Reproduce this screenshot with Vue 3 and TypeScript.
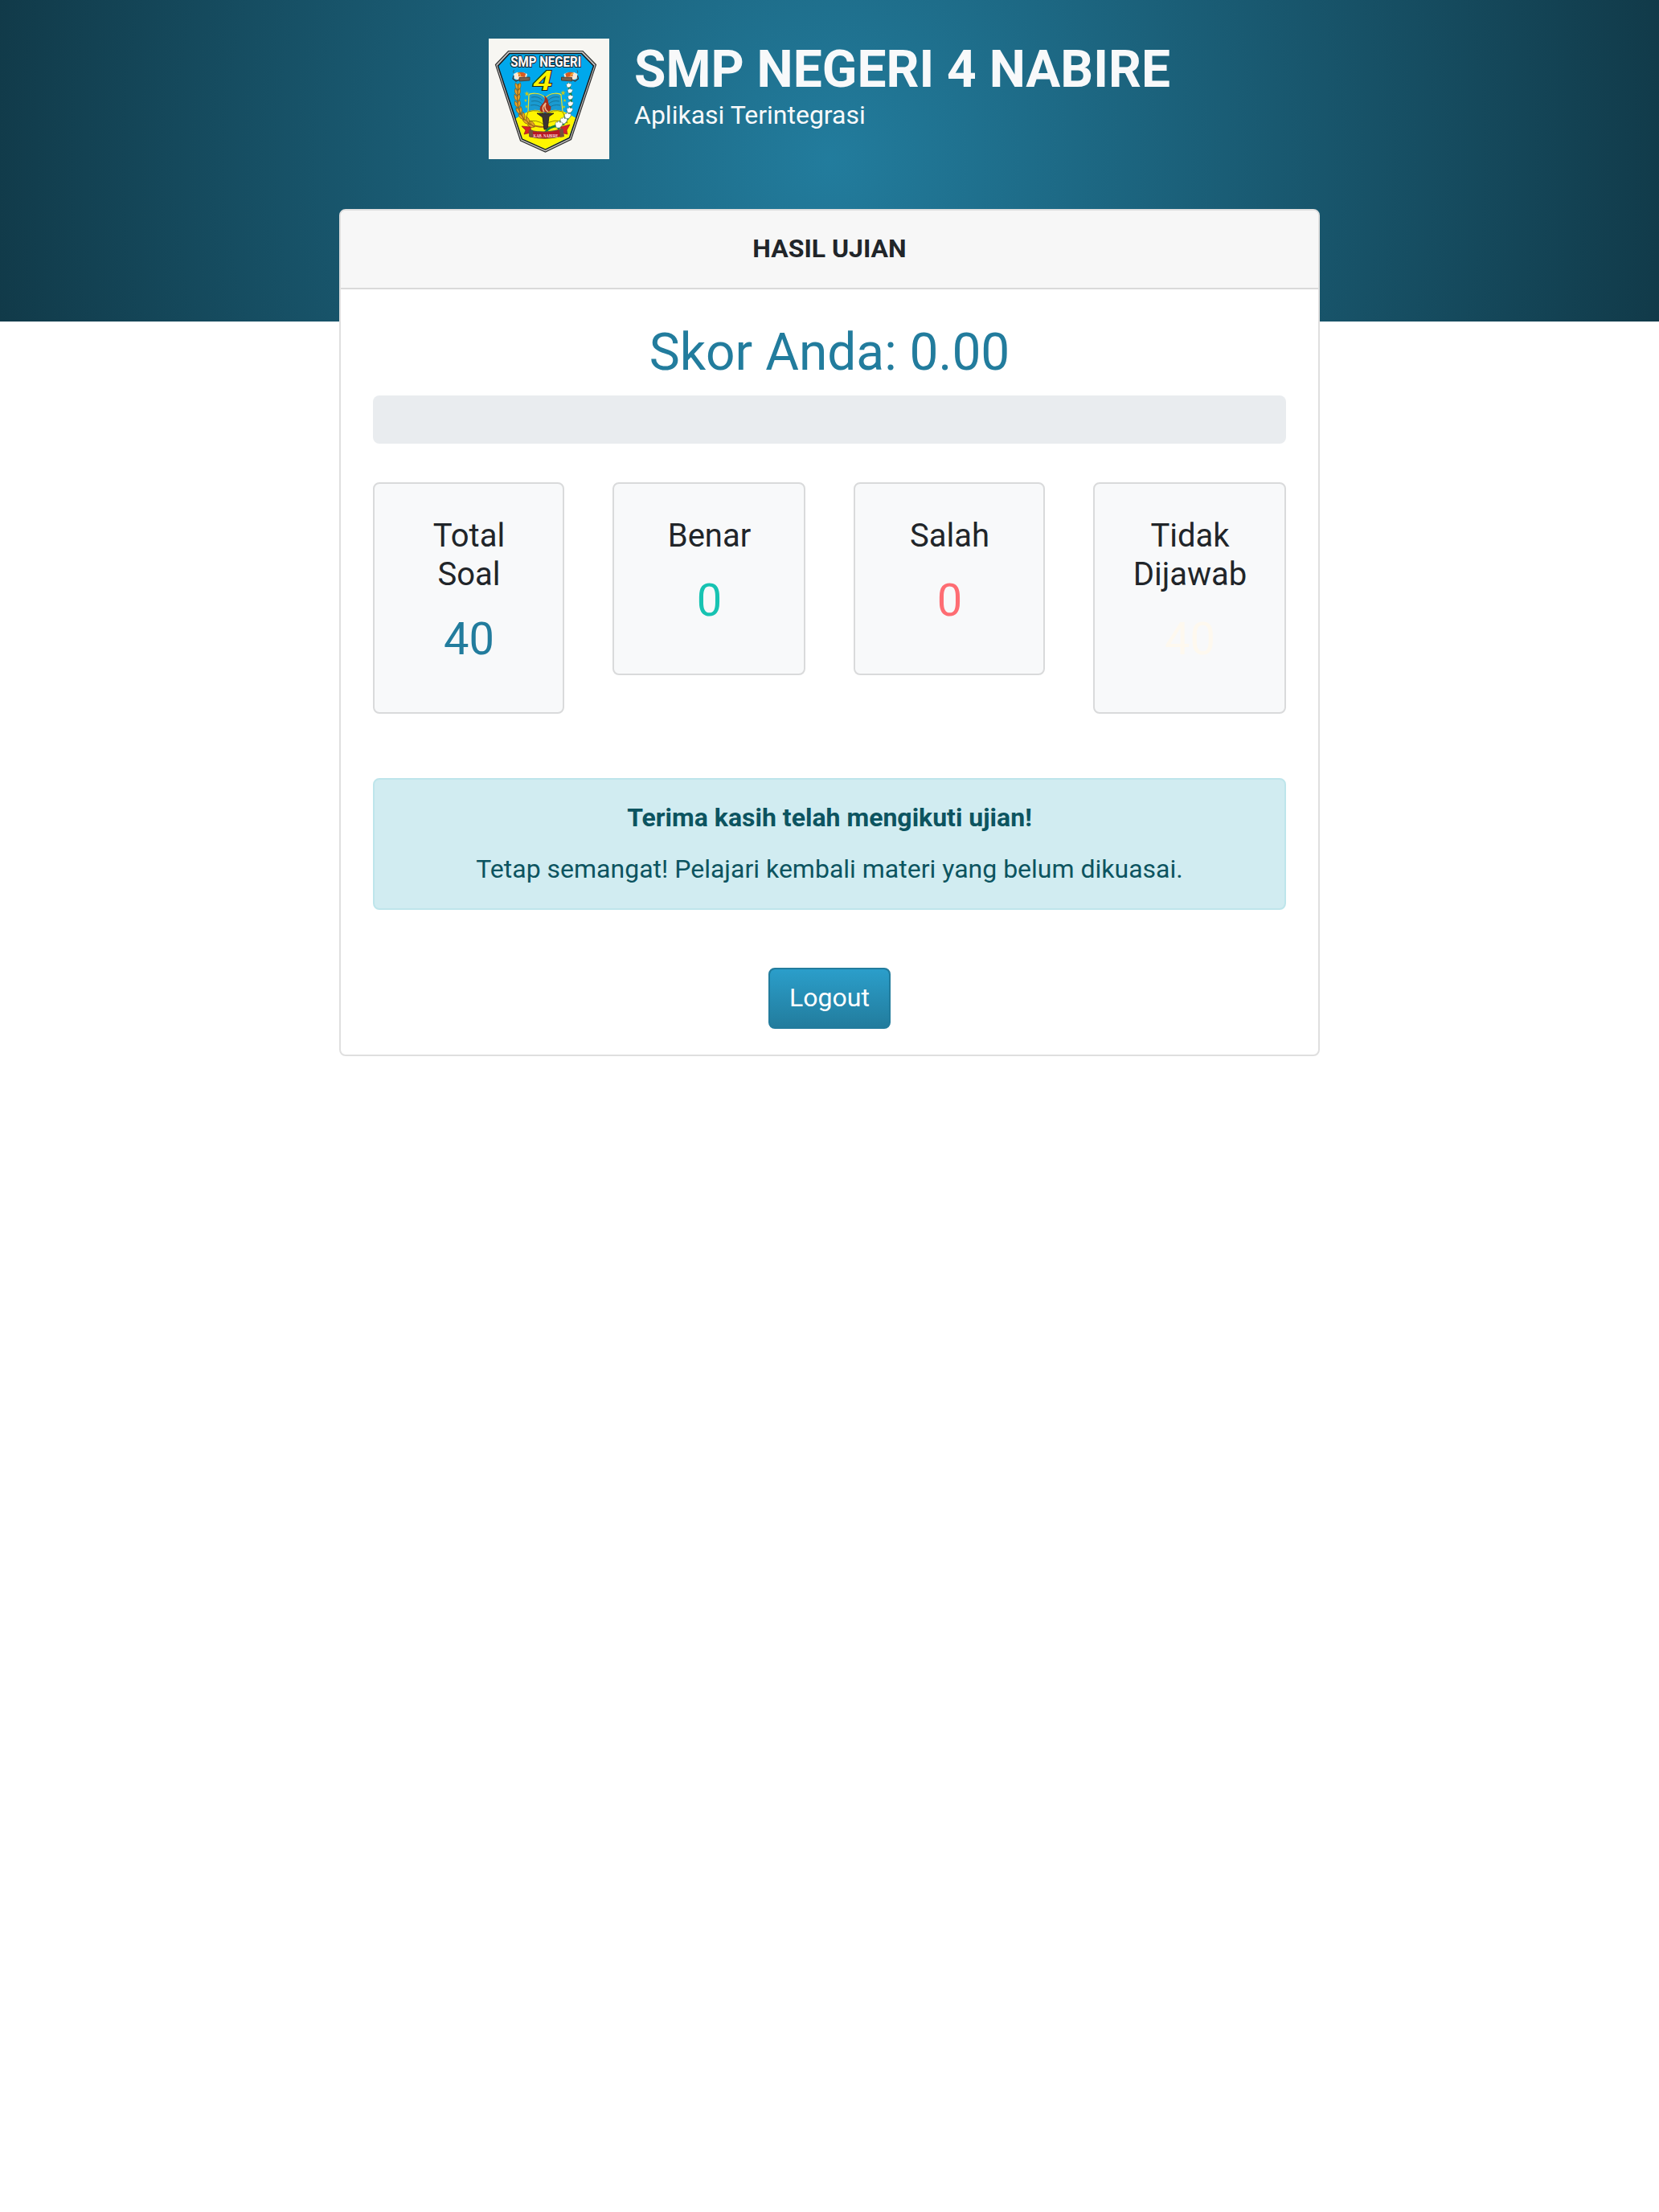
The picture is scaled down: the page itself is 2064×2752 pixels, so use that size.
<script setup lang="ts">
interface Stat { label: string; value: number; tone: string }
const stats: Stat[] = [
  { label: 'Total Soal', value: 40, tone: 'primary' },
  { label: 'Benar', value: 0, tone: 'success' },
  { label: 'Salah', value: 0, tone: 'danger' },
  { label: 'Tidak Dijawab', value: 40, tone: 'warning' },
]

// Emblem details: [x, y, rotation] for grains, [x, y, scale] for stars and cotton buds
const grains = [[36.5, 59, -2], [36, 66, -2], [35.5, 73, -4], [36, 81, -8], [38, 89, -16], [41.5, 96, -26], [47, 102, -38], [53, 107, -55]]
const stars = [[47.5, 68.5, 3.3], [46, 77, 2.2], [47, 84.5, 2.2], [92.5, 67.5, 3.3], [94.5, 77, 2.2], [93.5, 85, 2.2]]
const buds = [[99.5, 58, 0.9], [101, 65, 0.9], [101.5, 73, 0.95], [101.5, 81, 1], [100.5, 89, 1.1], [98, 96, 1.2], [93, 102, 1.3], [87, 107, 1.35]]
</script>

<template>
  <div class="page">
    <header class="banner">
      <div class="brand">
        <svg class="logo" viewBox="0 0 150 150">
          <rect width="150" height="150" fill="#f7f6f2" />
          <path d="M24.5 15.5 L117 15.5 L133.5 32.5 L102.5 125.5 L70.5 141 L39.5 127 L8.5 32.5 Z" fill="#c4c4c4" stroke="#303030" stroke-width="1.2" />
          <path d="M26 18.5 L115.5 18.5 L130.5 34 L100.5 123.5 L70.5 138 L41.5 125 L11.5 34 Z" fill="#00a8ec" stroke="#1b1b1b" stroke-width="1.5" />
          <path d="M33.8 99.5 Q69 74 108 98.500 L99.8 122.8 L70.5 137.2 L42.2 124.4 Z" fill="#fff500" />
          <text x="71.2" y="35.3" text-anchor="middle" textLength="88" lengthAdjust="spacingAndGlyphs" class="arch">SMP NEGERI</text>
          <text x="67.3" y="64" text-anchor="middle" textLength="24" lengthAdjust="spacingAndGlyphs" class="four">4</text>
          <g v-for="side in [0, 1]" :key="side" :transform="side ? 'translate(141.5 0) scale(-1 1)' : undefined">
            <path d="M31 44l4-2 8 0 5 2-1 5-8 3-7-2z" fill="#f5e9d8" />
            <path d="M31 43q-1-4 1-4M36 43q5-2 10 1" stroke="#3f4950" stroke-width=".7" fill="none" />
            <path d="M37 42q6-1 9 2l-1 4-8-1z" fill="#d85b20" />
            <path d="M36 43q4 1 3 4" stroke="#f0ad35" stroke-width="1.8" fill="none" />
            <path d="M31 46l-1 4 4 3 4-2" fill="none" stroke="#4a2d21" stroke-width="1.1" />
            <path d="M38 48.5l13-.5v4l-13 1z" fill="#75604c" stroke="#44342a" stroke-width=".8" />
          </g>
          <path d="M70.5 74C64 66 52 68 50 70L49 91C57 88 66 89 70.5 95C75 89 84 88 92 91L90 70C88 68 77 66 70.5 74Z" fill="#1a9bd2" stroke="#ece526" stroke-width="1.2" />
          <path d="M53 73q9-2 14 4M53 78q9-2 14 4M52 83q9-2 15 4M88 73q-9-2-14 4M88 78q-9-2-14 4M89 83q-9-2-15 4" fill="none" stroke="#176a88" stroke-width=".8" />
          <path d="M49 91Q62 87 70.5 95Q79 87 92 91L98 105Q80 98 70 108Q60 99 45 104Z" fill="#fff500" stroke="#877e08" stroke-width=".9" />
          <path v-for="(s, i) in stars" :key="'star' + i" :transform="`translate(${s[0]} ${s[1]}) scale(${s[2]})`" d="M0-1L.25-.3 1-.3.4.15.6.9 0 .45-.6.9-.4.15-1-.3-.25-.3Z" fill="#c7c51f" />
          <path d="M37 56C34 80 37 94 47 104Q57 111 76 110" fill="none" stroke="#a86b18" stroke-width="1.8" />
          <g v-for="(g, i) in grains" :key="'grain' + i" :transform="`translate(${g[0]} ${g[1]}) rotate(${g[2]})`">
            <path d="M0 5Q-5 2-3-4Q1-1 0 5ZM0 5Q5 2 3-4Q-1-1 0 5Z" fill="#e5a42a" stroke="#8b5917" stroke-width=".7" />
          </g>
          <path d="M60 93L81 93L75 97L73 113L69 113L67 98Z" fill="#3b3435" stroke="#191919" stroke-width=".8" />
          <path d="M65 91C60 82 73 82 69 71C77 76 72 82 77 84Q79 89 73 92Z" fill="#a62d18" />
          <path d="M69 91Q65 86 71 80Q68 88 74 91" stroke="#efb98b" stroke-width="1.5" fill="none" />
          <path d="M99 55C105 75 104 94 90 105M88 109Q76 108 70 117" fill="none" stroke="#11803f" stroke-width="2.6" />
          <g v-for="(b, i) in buds" :key="'bud' + i" :transform="`translate(${b[0]} ${b[1]}) scale(${b[2]})`">
            <path d="M-4 0l4 5 4-5z" fill="#127c40" />
            <path d="M-3 0q0-3 2-2q1-3 2 0q4-1 2 3l-2 2-3 0z" fill="#fff" stroke="#687a78" stroke-width=".5" />
          </g>
          <path d="M41 109l11 1 1 7-9 2 2-5zM101 107l-11 3-1 7 9 2-1-5z" fill="#d82028" stroke="#921b20" stroke-width=".7" />
          <path d="M50 114Q71 119 92 112L93 121Q71 127 51 122Z" fill="#b91825" stroke="#77503a" />
          <path d="M51 113l4 1v9l-5-1zM88 113l4-1 2 10-5 1z" fill="#75513d" />
          <text x="71" y="122.5" text-anchor="middle" textLength="31" lengthAdjust="spacingAndGlyphs" class="ribbon">KAB. NABIRE</text>
        </svg>
        <div class="names">
          <h1>SMP NEGERI 4 NABIRE</h1>
          <p>Aplikasi Terintegrasi</p>
        </div>
      </div>
    </header>

    <main class="card">
      <div class="card-header">HASIL UJIAN</div>
      <div class="card-body">
        <h2>Skor Anda: 0.00</h2>
        <div class="progress"></div>
        <div class="stats">
          <section v-for="s in stats" :key="s.label" class="stat">
            <h5>{{ s.label }}</h5>
            <p :class="s.tone">{{ s.value }}</p>
          </section>
        </div>
        <div class="alert">
          <strong>Terima kasih telah mengikuti ujian!</strong>
          <p>Tetap semangat! Pelajari kembali materi yang belum dikuasai.</p>
        </div>
        <button type="button">Logout</button>
      </div>
    </main>
  </div>
</template>

<style>
body { background: #fff; }
</style>

<style scoped>
* { box-sizing: border-box; }
h1, h2, h5, p { margin: 0; font-weight: 400; }
.page { min-height: 2752px; font: 32px/48px Roboto, sans-serif; color: #212529; background: #fff; }
.banner { height: 400px; padding-top: 48px; background: radial-gradient(circle, #227c9d, #113a49); }
.brand { display: flex; width: 848px; margin: 0 auto; gap: 31px; }
.logo { display: block; width: 150px; height: 150px; flex: none; }
.names { color: #f8f9fa; white-space: nowrap; }
.names h1 { padding-top: 1px; font-size: 64px; line-height: 76px; font-weight: 700; }
.names p { line-height: 36px; }
.arch { font: 700 18px Roboto, sans-serif; fill: #fff; stroke: #202024; stroke-width: 2.2px; paint-order: stroke; }
.four { font: italic 500 34px Roboto, sans-serif; fill: #fff200; stroke: #25251b; stroke-width: 2px; paint-order: stroke; }
.ribbon { font: 700 6.5px "Liberation Serif", serif; fill: #f6dede; }
.card { width: 1220px; height: 1054px; margin: -140px auto 0; border: 2px solid #dfdfdf; border-radius: 8px; background: #fff; position: relative; overflow: hidden; text-align: center; }
.card-header { height: 98px; padding: 23px 40px; background: #f7f7f7; border-bottom: 2px solid #d9d9d9; font-weight: 700; }
.card-body { padding: 40px; }
h2 { padding-top: 1px; font-size: 64px; line-height: 76px; color: #227c9d; }
.progress { height: 60px; margin: 15px 0 48px; border-radius: 8px; background: #e9ecef; }
.stats { display: grid; grid-template-columns: 238px 240px 238px 240px; gap: 60px; align-items: start; }
.stat { padding: 40px; border: 2px solid #d9dadb; border-radius: 8px; background: #f8f9fa; }
.stat h5 { padding: 1px 0 0 1px; font-size: 40px; line-height: 48px; margin-bottom: 23px; }
.stat p { padding-left: 1px; font-size: 56px; line-height: 67px; margin-bottom: 17px; }
.primary { color: #227c9d; }
.success { color: #17c3b2; }
.danger { color: #fe6d73; }
.warning { color: #fef9ef; }
.alert { height: 164px; margin-top: 80px; padding: 23px 40px; border: 2px solid #bee5eb; border-radius: 8px; background: #d1ecf1; color: #0c5460; }
.alert strong { display: block; margin-bottom: 16px; }
button { display: block; width: 152px; height: 76px; margin: 72px auto 0; padding: 11px 0 13px; border: 2px solid #227c9d; border-radius: 8px; background: linear-gradient(#2b9eca, #227c9d) padding-box, #227c9d; color: #fff; font: 32px/48px Roboto, sans-serif; }
</style>
